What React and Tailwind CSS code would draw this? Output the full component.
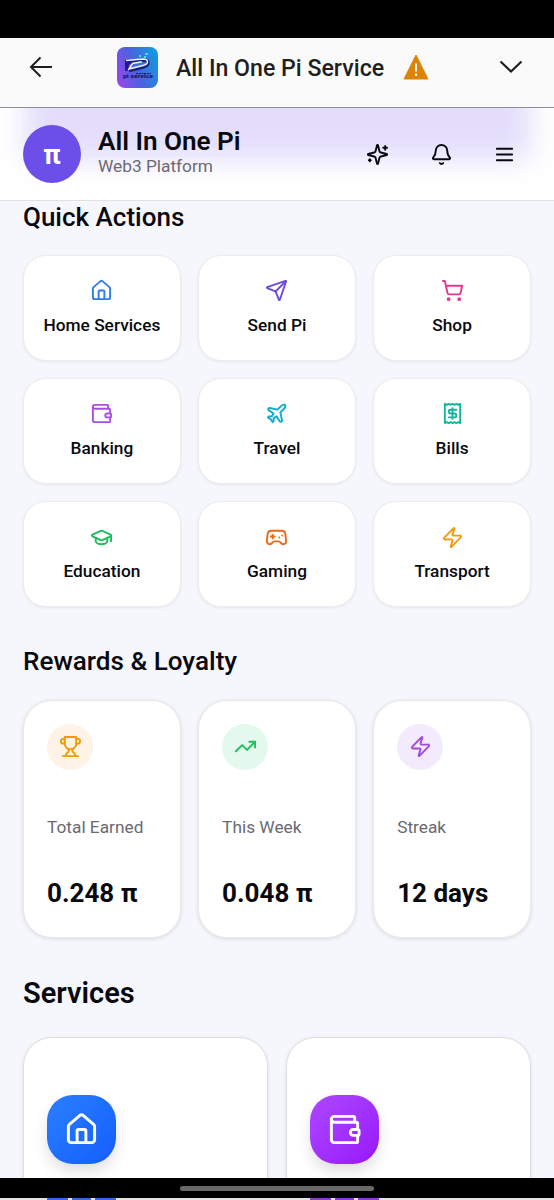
import {
  Bell,
  Gamepad2,
  GraduationCap,
  House,
  Plane,
  Send,
  ShoppingCart,
  TrendingUp,
  Wallet,
  Zap,
} from "lucide-react";

function StrokeIcon({ size = 24, className, children }) {
  return (
    <svg
      width={size}
      height={size}
      viewBox="0 0 24 24"
      fill="none"
      stroke="currentColor"
      strokeWidth="2"
      strokeLinecap="round"
      strokeLinejoin="round"
      className={className}
    >
      {children}
    </svg>
  );
}

const Sparkles = (props) => (
  <StrokeIcon {...props}>
    <path d="M9.937 15.5A2 2 0 0 0 8.5 14.063l-6.135-1.582a.5.5 0 0 1 0-.962L8.5 9.936A2 2 0 0 0 9.937 8.5l1.582-6.135a.5.5 0 0 1 .963 0L14.063 8.5A2 2 0 0 0 15.5 9.937l6.135 1.581a.5.5 0 0 1 0 .964L15.5 14.063a2 2 0 0 0-1.437 1.437l-1.582 6.135a.5.5 0 0 1-.963 0z" />
    <path d="M20 3v4M22 5h-4M4 17v2M5 18H3" />
  </StrokeIcon>
);

const Menu = (props) => (
  <StrokeIcon {...props}>
    <path d="M4 6h16M4 12h16M4 18h16" />
  </StrokeIcon>
);

const Receipt = (props) => (
  <StrokeIcon {...props}>
    <path d="M4 2v20l2-1 2 1 2-1 2 1 2-1 2 1 2-1 2 1V2l-2 1-2-1-2 1-2-1-2 1-2-1-2 1Z" />
    <path d="M16 8h-6a2 2 0 1 0 0 4h4a2 2 0 1 1 0 4H8M12 17.5v-11" />
  </StrokeIcon>
);

const Trophy = (props) => (
  <StrokeIcon {...props}>
    <path d="M6 9H4.5a2.5 2.5 0 0 1 0-5H6M18 9h1.5a2.5 2.5 0 0 0 0-5H18M4 22h16" />
    <path d="M10 14.66V17c0 .55-.47.98-.97 1.21C7.85 18.75 7 20.24 7 22M14 14.66V17c0 .55.47.98.97 1.21C16.15 18.75 17 20.24 17 22" />
    <path d="M18 2H6v7a6 6 0 0 0 12 0V2Z" />
  </StrokeIcon>
);

const quickActions = [
  { label: "Home Services", icon: House, color: "text-[#2f7de9]" },
  { label: "Send Pi", icon: Send, color: "text-[#6a4be0]" },
  { label: "Shop", icon: ShoppingCart, color: "text-[#e0398f]" },
  { label: "Banking", icon: Wallet, color: "text-[#a84fe6]" },
  { label: "Travel", icon: Plane, color: "text-[#0fadca]" },
  { label: "Bills", icon: Receipt, color: "text-[#14b79c]" },
  { label: "Education", icon: GraduationCap, color: "text-[#1abf5b]" },
  { label: "Gaming", icon: Gamepad2, color: "text-[#ea6a1a]" },
  { label: "Transport", icon: Zap, color: "text-[#f09a16]" },
];

const rewards = [
  { label: "Total Earned", value: "0.248 π", icon: Trophy, color: "bg-[#fef3e6] text-[#f0990f]" },
  { label: "This Week", value: "0.048 π", icon: TrendingUp, color: "bg-[#e4f9ed] text-[#1fbf5f]" },
  { label: "Streak", value: "12 days", icon: Zap, color: "bg-[#f4eafe] text-[#a24be0]" },
];

const services = [
  { id: "home", icon: House, tile: "from-[#2b7fff] to-[#155dfc]", strip: "bg-[#2f6be0]" },
  { id: "wallet", icon: Wallet, tile: "from-[#ad46ff] to-[#9810fa]", strip: "bg-[#9038d8]" },
];

function AppLogo() {
  return (
    <svg width="41" height="41" viewBox="0 0 41 41" className="shrink-0">
      <defs>
        <linearGradient id="logoBg" x1="0" y1="0.7" x2="1" y2="0.3">
          <stop offset="0" stopColor="#9149ea" />
          <stop offset="0.45" stopColor="#4b62df" />
          <stop offset="1" stopColor="#1499e0" />
        </linearGradient>
      </defs>
      <rect width="41" height="41" rx="8" fill="url(#logoBg)" />
      <path d="M8 13 13 12 11 24 8 24Z" fill="#26139a" />
      <path d="M12 15.5 27 13C33 13 32 18.5 26 20L12 23.5" fill="none" stroke="#14217a" strokeWidth="3.5" />
      <path d="M9 13.5 26 12C32 12 32 17 26 18.5L12 22 15.5 16.5 25 14.8" fill="none" stroke="#e9f7ff" strokeWidth="1.5" />
      <path d="M22 9h2M28 7h3M27 10h2" stroke="#52d3f5" strokeWidth="1.8" />
      <path d="M19 26.5h15" stroke="#17176b" strokeWidth="1" strokeDasharray="2 0.7" />
      <text x="6" y="31" fontFamily="Roboto, sans-serif" fontSize="6" fontWeight="900" fill="#17176b" textLength="30" lengthAdjust="spacingAndGlyphs">
        pi service
      </text>
    </svg>
  );
}

function BrowserBar() {
  return (
    <div className="flex h-[70px] shrink-0 items-start border-b-[1.5px] border-[#8e8d95] bg-[#fafafa] pt-[8.5px] text-[#1f1f1f]">
      <svg width="24" height="22" viewBox="0 0 24 22" fill="none" stroke="currentColor" strokeWidth="2" className="ml-[29px] mt-[9.5px] shrink-0">
        <path d="M23 11H2M11.5 1.5 2 11l9.5 9.5" />
      </svg>
      <div className="ml-[64px]">
        <AppLogo />
      </div>
      <h1 className="ml-[18px] mt-[6px] whitespace-nowrap text-[23.15px] font-medium leading-[32px]">All In One Pi Service</h1>
      <svg width="26" height="26" viewBox="0 0 26 26" className="ml-[19px] mt-[7.5px] shrink-0">
        <path d="M13 1 25 25H1Z" fill="#dc8409" stroke="#dc8409" strokeWidth="1" strokeLinejoin="round" />
        <path d="M13 9.5v8M13 19.5v2.5" stroke="#fff" strokeWidth="1.8" />
      </svg>
      <svg width="24" height="14" viewBox="0 0 24 14" fill="none" stroke="currentColor" strokeWidth="2.2" className="ml-auto mr-[31px] mt-[13.5px] shrink-0">
        <path d="m1.5 1.5 10.5 10L22.5 1.5" />
      </svg>
    </div>
  );
}

function Header() {
  return (
    <header className="relative flex h-[93px] shrink-0 items-center overflow-hidden border-b border-[#e0e0e5] bg-white px-[23px] pb-[1px]">
      <div className="absolute -top-10 left-[25px] right-[24px] h-[92px] bg-[#e3ddfb] blur-[14px]" />
      <div className="relative flex size-[58px] items-center justify-center rounded-full bg-[#6c4fe8] pt-[4px] text-[27px] font-bold text-white">
        π
      </div>
      <div className="relative ml-[17px] pb-[3px]">
        <p className="text-[26.1px] font-semibold leading-[29px]">All In One Pi</p>
        <p className="text-[17.3px] leading-[21px] text-[#6a6a71]">Web3 Platform</p>
      </div>
      <div className="relative ml-auto mr-[15px] flex items-center gap-[40.5px] pt-px">
        <Sparkles size={23} />
        <Bell size={23} />
        <Menu size={23} />
      </div>
    </header>
  );
}

function QuickActionCard({ label, icon: Icon, color }) {
  return (
    <button className="flex h-[105.9px] flex-col items-center rounded-[23px] border border-[#ececf0] bg-white pt-[23.3px] shadow-[0_1px_3px_rgba(0,0,0,0.07)]">
      <Icon size={23} className={color} />
      <span className="mt-[11.5px] whitespace-nowrap text-[17.3px] font-medium leading-[23px]">{label}</span>
    </button>
  );
}

function RewardCard({ label, value, icon: Icon, color }) {
  return (
    <div className="h-[238px] rounded-[29px] border border-[#e9e9ed] bg-white px-[23px] pt-[23px] shadow-[0_1px_4px_rgba(0,0,0,0.12)]">
      <div className={`flex size-[46px] items-center justify-center rounded-full ${color}`}>
        <Icon size={23} />
      </div>
      <p className="mt-[46px] whitespace-nowrap text-[17.3px] leading-[23px] text-[#6a6a71]">{label}</p>
      <p className="mt-[35.5px] whitespace-nowrap text-[26px] font-bold leading-[38px]">{value}</p>
    </div>
  );
}

function ServiceCard({ icon: Icon, tile }) {
  return (
    <div className="h-[240px] rounded-[29px] border-[1.5px] border-[#dddde2] bg-white px-[23px] pt-[57px] shadow-[0_1px_4px_rgba(0,0,0,0.08)]">
      <div className={`flex size-[69px] items-center justify-center rounded-[26px] bg-linear-to-br shadow-[0_8px_16px_-2px_rgba(0,0,0,0.15)] ${tile}`}>
        <Icon size={35} className="text-white" />
      </div>
    </div>
  );
}

export default function App() {
  return (
    <div className="flex h-[1200px] w-[554px] flex-col overflow-hidden bg-[#f6f7fc] font-[Roboto,sans-serif] text-[#09090f]">
      <div className="h-[38px] shrink-0 bg-black" />
      <BrowserBar />
      <Header />

      <main className="min-h-0 flex-1 overflow-hidden px-[23px]">
        <h2 className="text-[26px] font-medium leading-[32px]">Quick Actions</h2>
        <div className="mt-[22px] grid grid-cols-3 gap-[17.3px]">
          {quickActions.map((action) => (
            <QuickActionCard key={action.label} {...action} />
          ))}
        </div>

        <h2 className="mt-[35.5px] text-[26.1px] font-medium leading-[36px]">Rewards &amp; Loyalty</h2>
        <div className="mt-[21px] grid grid-cols-3 gap-[17.3px]">
          {rewards.map((reward) => (
            <RewardCard key={reward.label} {...reward} />
          ))}
        </div>

        <h2 className="mt-[35.5px] text-[29px] font-semibold leading-[40px]">Services</h2>
        <div className="mt-[23.8px] grid grid-cols-2 gap-[17.3px]">
          {services.map(({ id, icon, tile }) => (
            <ServiceCard key={id} icon={icon} tile={tile} />
          ))}
        </div>
      </main>

      <div className="flex h-[20px] shrink-0 items-center justify-center bg-black">
        <div className="h-[5px] w-[194px] rounded-full bg-[#686868]" />
      </div>
      <div className="grid h-[2px] shrink-0 grid-cols-2 gap-[17.3px] bg-[#e4e4e8] px-[23px]">
        {services.map(({ id, strip }) => (
          <div key={id} className="flex gap-1 pl-[24px]">
            <span className={`h-full w-[21px] ${strip}`} />
            <span className={`h-full w-[19px] ${strip}`} />
            <span className={`h-full w-[21px] ${strip}`} />
          </div>
        ))}
      </div>
    </div>
  );
}
